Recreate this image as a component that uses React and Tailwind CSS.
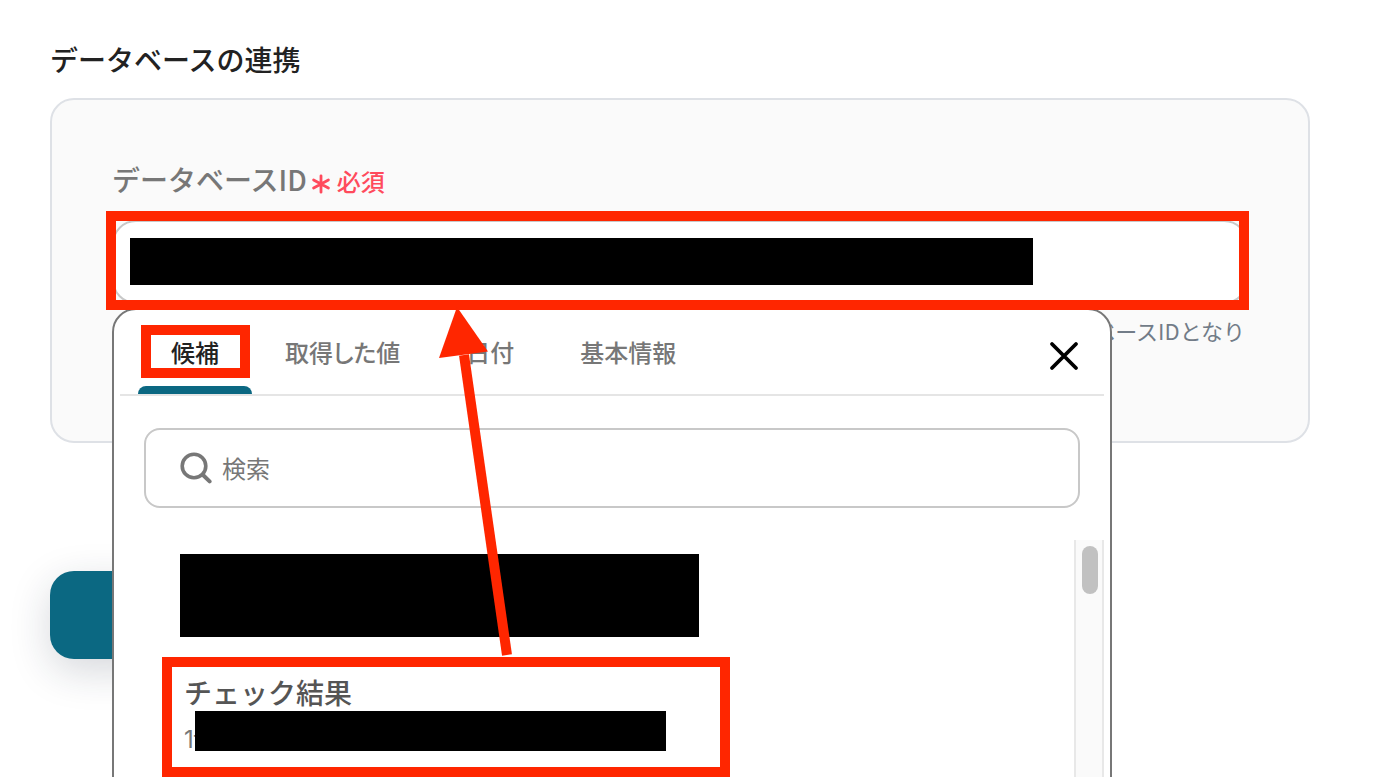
const tabs = ["候補", "取得した値", "日付", "基本情報"];

function Highlight({ className }) {
  return (
    <span
      aria-hidden="true"
      className={`pointer-events-none absolute border-[10px] border-[#ff2600] ${className}`}
    />
  );
}

function AsteriskIcon() {
  return (
    <svg className="h-5 w-5 shrink-0" viewBox="0 0 20 20" fill="none" stroke="currentColor" aria-hidden="true">
      <path d="M10 1.8V18.2M2.6 6L17.4 14M17.4 6L2.6 14" strokeWidth="2.8" strokeLinecap="round" />
    </svg>
  );
}

function SearchIcon() {
  return (
    <svg className="h-8 w-8 shrink-0" viewBox="0 0 32 32" fill="none" stroke="#777" aria-hidden="true">
      <circle cx="14" cy="14" r="11.8" strokeWidth="3.6" />
      <path d="M23 23l6.6 6.4" strokeWidth="4" strokeLinecap="round" />
    </svg>
  );
}

function Arrow() {
  return (
    <svg
      className="pointer-events-none absolute top-0 left-[325px] h-[350px] w-[76px]"
      viewBox="0 0 76 350"
      aria-hidden="true"
    >
      <path d="M27 48L70 348" stroke="#ff2600" strokeWidth="10" fill="none" />
      <path d="M20 0L2 51L51 44.5Z" fill="#ff2600" />
    </svg>
  );
}

function Picker() {
  return (
    <div className="absolute top-[88px] left-0 h-[520px] w-[1000px] rounded-3xl border-2 border-[#777] bg-white px-1.5">
      <div className="flex h-[86px] items-stretch border-b-2 border-[#e5e5e5] pr-5 pl-[18px]">
        <div role="tablist" className="flex [font-feature-settings:'palt']">
          {tabs.map((tab, i) => (
            <button
              key={tab}
              type="button"
              role="tab"
              aria-selected={i === 0}
              className={`relative px-[33px] text-2xl font-medium ${
                i === 0 ? "text-[#222]" : "text-[#777]"
              }`}
            >
              {tab}
              {i === 0 && <Highlight className="top-[15px] right-0.5 left-[3px] h-[53px]" />}
              {i === 0 && <span className="absolute inset-x-0 bottom-0 h-2 rounded-t-lg bg-[#0b6882]" />}
            </button>
          ))}
        </div>
        <button type="button" aria-label="閉じる" className="mt-6 ml-auto h-10 w-10">
          <svg viewBox="0 0 40 40" fill="none" stroke="#000" strokeWidth="3.8" strokeLinecap="round" className="h-10 w-10">
            <path d="M8 10L32 34M32 10L8 34" />
          </svg>
        </button>
      </div>

      <label className="mx-6 mt-8 flex h-20 items-center gap-2.5 rounded-2xl border-2 border-[#c8c8c8] pr-8 pl-[34px]">
        <SearchIcon />
        <input
          type="search"
          aria-label="検索"
          placeholder="検索"
          className="min-w-0 flex-1 bg-transparent text-2xl text-[#777] outline-none placeholder:text-[#777]"
        />
      </label>

      <div className="mt-8 flex h-[280px]">
        <ul className="flex-1 pt-3.5 pl-[60px]">
          <li className="h-[83px] w-[519px] bg-black" />
          <li className="relative mt-5 -ml-[18px] h-[120px] w-[568px] pt-[15px] pl-[22px]">
            <Highlight className="inset-0" />
            <p className="text-[28px] leading-10 font-medium text-[#555]">チェック結果</p>
            <p className="relative font-['Inter',sans-serif] text-2xl leading-[56px] text-[#777]">
              1f
              <span className="absolute -top-px left-[11px] h-10 w-[471px] bg-black" />
            </p>
          </li>
        </ul>
        <div className="w-[30px] border-x-2 border-[#e8e8e8] bg-[#fafafa] pt-1.5 pr-1 pl-1.5">
          <div className="h-12 w-full rounded-full bg-[#c1c1c1]" />
        </div>
      </div>
    </div>
  );
}

export default function App() {
  return (
    <main className="h-screen overflow-hidden bg-white pt-[38px] pr-[73px] pl-[50px] font-['Noto_Sans_CJK_JP',sans-serif]">
      <h1 className="text-[28px] leading-[42px] font-medium text-[#222]">データベースの連携</h1>

      <section className="mt-[18px] rounded-3xl border-2 border-[#dee1e6] bg-[#fafafa] px-[60px] pt-[58px] pb-[60px]">
        <label htmlFor="database-id" className="flex items-center gap-1 text-[28px] leading-[42px] font-medium text-[#777]">
          データベースID
          <span className="flex items-center gap-1.5 pt-1 text-2xl text-[#ff4a5c]">
            <span className="pt-1.5">
              <AsteriskIcon />
            </span>
            必須
          </span>
        </label>

        <div className="relative z-10 mt-5">
          <input
            id="database-id"
            type="text"
            className="block h-[84px] w-full rounded-3xl border-2 border-[#c8c8c8] bg-white px-4 text-2xl"
          />
          <Picker />
          <span className="absolute top-[18px] left-[18px] h-[47px] w-[903px] bg-black" />
          <Highlight className="-top-[9px] -right-px -left-1.5 h-[99px]" />
          <div className="pointer-events-none absolute top-[87px] left-0">
            <Arrow />
          </div>
        </div>

        <p className="mt-[9px] h-[68px] pr-[3px] text-right text-[22px] leading-[34px] text-[#727c88]">ベースIDとなり</p>
      </section>

      <button
        type="button"
        aria-label="次へ"
        className="mt-32 block h-[88px] w-[200px] rounded-3xl bg-[#0b6882] shadow-[0_12px_40px_rgba(30,40,60,0.18)]"
      />
    </main>
  );
}
